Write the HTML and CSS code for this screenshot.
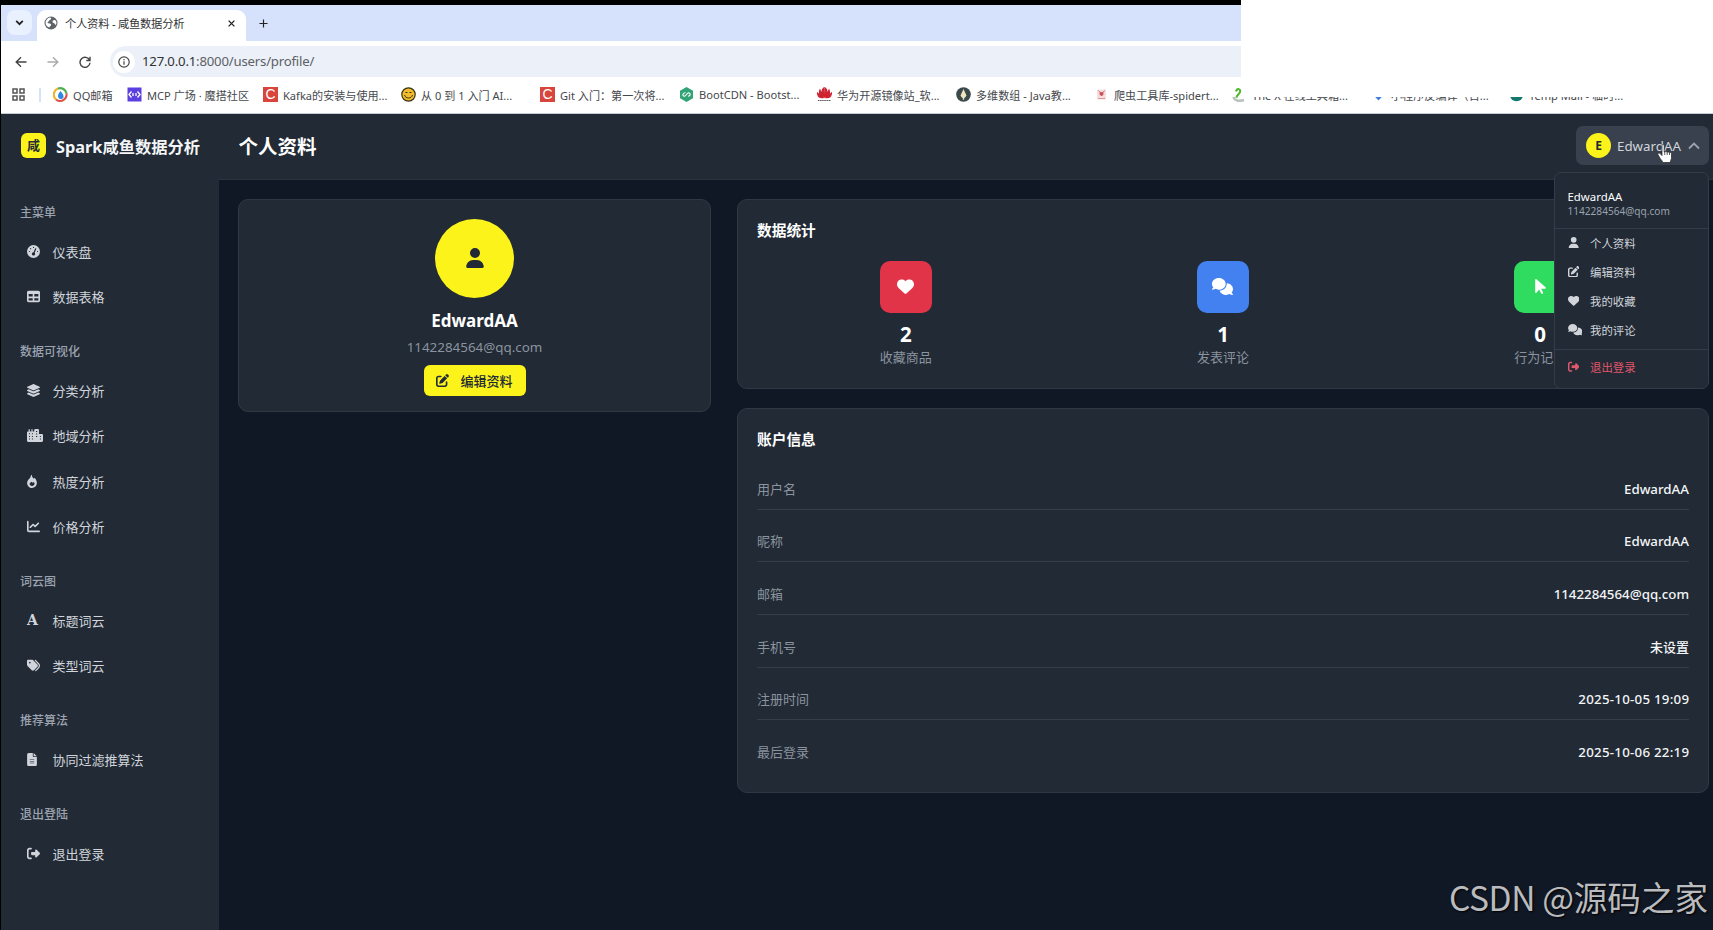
FILE: index.html
```html
<!doctype html>
<html lang="zh-CN">

<head>
    <meta charset="utf-8">
    <meta name="viewport" content="width=device-width, initial-scale=1.0">
    <title>个人资料 - 咸鱼数据分析</title>
    <link rel="stylesheet" href="styles.css">
</head>

<body>
    <!-- 图标库 -->
    <svg class="sprite">
        <symbol id="i-user" viewBox="0 0 448 512"><path d="M224 256A128 128 0 1 0 224 0a128 128 0 1 0 0 256zm-45.7 48C79.8 304 0 383.8 0 482.3C0 498.7 13.3 512 29.7 512H418.3c16.4 0 29.7-13.3 29.7-29.7C448 383.8 368.2 304 269.7 304H178.3z"/></symbol>
        <symbol id="i-heart" viewBox="0 0 512 512"><path d="M47.6 300.4L228.3 469.1c7.5 7 17.4 10.9 27.7 10.9s20.2-3.9 27.7-10.9L464.4 300.4c30.4-28.3 47.6-68 47.6-109.5v-5.8c0-69.9-50.5-129.5-119.4-141C347 36.5 300.6 51.4 268 84L256 96 244 84c-32.6-32.6-79-47.5-124.6-39.9C50.5 55.6 0 115.2 0 185.1v5.8c0 41.5 17.2 81.2 47.6 109.5z"/></symbol>
        <symbol id="i-comments" viewBox="0 0 640 512"><path d="M208 352c114.9 0 208-78.8 208-176S322.9 0 208 0S0 78.8 0 176c0 38.6 14.7 74.3 39.6 103.4c-3.5 9.4-8.7 17.7-14.2 24.7c-4.8 6.2-9.7 11-13.3 14.3c-1.8 1.6-3.3 2.9-4.3 3.7c-.5 .4-.9 .7-1.1 .8l-.2 .2C1 327.2-1.4 334.4 .8 340.9S9.1 352 16 352c21.8 0 43.8-5.6 62.1-12.5c9.2-3.5 17.8-7.4 25.2-11.4C134.1 343.3 169.8 352 208 352zM448 176c0 112.3-99.1 196.9-216.5 207C255.8 457.4 336.4 512 432 512c38.2 0 73.9-8.7 104.7-23.9c7.5 4 16 7.9 25.2 11.4c18.3 6.9 40.3 12.5 62.1 12.5c6.9 0 13.1-4.5 15.2-11.1c2.1-6.6-.2-13.8-5.8-17.9l-.2-.2c-.2-.2-.6-.4-1.1-.8c-1-.8-2.5-2-4.3-3.7c-3.6-3.3-8.5-8.1-13.3-14.3c-5.5-7-10.7-15.4-14.2-24.7c24.9-29 39.6-64.7 39.6-103.4c0-92.8-84.9-168.9-192.6-175.5c.4 5.1 .6 10.3 .6 15.5z"/></symbol>
        <symbol id="i-edit" viewBox="0 0 512 512"><path d="M471.6 21.7c-21.9-21.9-57.3-21.9-79.2 0L362.3 51.7l97.9 97.9 30.1-30.1c21.9-21.9 21.9-57.3 0-79.2L471.6 21.7zm-299.2 220c-6.1 6.1-10.8 13.6-13.5 21.9l-29.6 88.8c-2.9 8.6-.6 18.1 5.8 24.6s15.9 8.7 24.6 5.8l88.8-29.6c8.2-2.7 15.7-7.4 21.9-13.5L437.7 172.3 339.7 74.3 172.4 241.7zM96 64C43 64 0 107 0 160V416c0 53 43 96 96 96H352c53 0 96-43 96-96V320c0-17.7-14.3-32-32-32s-32 14.3-32 32v96c0 17.7-14.3 32-32 32H96c-17.7 0-32-14.3-32-32V160c0-17.7 14.3-32 32-32h96c17.7 0 32-14.3 32-32s-14.3-32-32-32H96z"/></symbol>
        <symbol id="i-logout" viewBox="0 0 512 512"><path d="M377.9 105.9L500.7 228.7c7.2 7.2 11.3 17.1 11.3 27.3s-4.1 20.1-11.3 27.3L377.9 406.1c-6.4 6.4-15 9.9-24 9.9c-18.7 0-33.9-15.2-33.9-33.9l0-62.1-128 0c-17.7 0-32-14.3-32-32l0-64c0-17.7 14.3-32 32-32l128 0 0-62.1c0-18.7 15.2-33.9 33.9-33.9c9 0 17.6 3.6 24 9.9zM160 96L96 96c-17.7 0-32 14.3-32 32l0 256c0 17.7 14.3 32 32 32l64 0c17.7 0 32 14.3 32 32s-14.3 32-32 32l-64 0c-53 0-96-43-96-96L0 128C0 75 43 32 96 32l64 0c17.7 0 32 14.3 32 32s-14.3 32-32 32z"/></symbol>
        <symbol id="i-gauge" viewBox="0 0 512 512"><path fill-rule="evenodd" d="M0 256a256 256 0 1 1 512 0A256 256 0 1 1 0 256zM280 96a24 24 0 1 0-48 0 24 24 0 1 0 48 0zM256 416c35.300 0 64-28.700 64-64c0-17.400-6.900-33.100-18.100-44.600L366 161.700c5.300-12.100-.2-26.300-12.300-31.600s-26.300 .2-31.600 12.300L257.900 288H256c-35.300 0-64 28.700-64 64s28.700 64 64 64zM168 144a24 24 0 1 0-48 0 24 24 0 1 0 48 0zM96 280a24 24 0 1 0 0-48 24 24 0 1 0 0 48zM440 256a24 24 0 1 0-48 0 24 24 0 1 0 48 0z"/></symbol>
        <symbol id="i-table" viewBox="0 0 512 512"><path d="M64 256V160H224v96H64zm0 64H224v96H64V320zm224 96V320H448v96H288zM448 256H288V160H448v96zM64 32C28.700 32 0 60.700 0 96V416c0 35.300 28.700 64 64 64H448c35.300 0 64-28.700 64-64V96c0-35.300-28.700-64-64-64H64z"/></symbol>
        <symbol id="i-layers" viewBox="32 0 512 512"><path d="M264.5 5.2c14.9-6.9 32.1-6.9 47 0l218.6 101c8.5 3.9 13.9 12.4 13.9 21.8s-5.4 17.9-13.9 21.8l-218.6 101c-14.9 6.9-32.1 6.9-47 0L45.900 149.800C37.400 145.800 32 137.300 32 128s5.400-17.900 13.900-21.800L264.500 5.200zM476.900 209.600l53.200 24.600c8.500 3.900 13.900 12.400 13.900 21.800s-5.400 17.900-13.900 21.800l-218.600 101c-14.900 6.900-32.100 6.900-47 0L45.900 277.800C37.400 273.800 32 265.300 32 256s5.400-17.900 13.900-21.800l53.200-24.600 152 70.200c23.400 10.800 50.400 10.800 73.800 0l152-70.200zm-152 198.200l152-70.200 53.200 24.600c8.500 3.900 13.900 12.400 13.900 21.800s-5.400 17.900-13.900 21.800l-218.600 101c-14.900 6.900-32.100 6.900-47 0L45.900 405.800C37.400 401.800 32 393.300 32 384s5.400-17.900 13.900-21.800l53.200-24.600 152 70.200c23.400 10.800 50.400 10.800 73.800 0z"/></symbol>
        <symbol id="i-city" viewBox="0 0 640 512"><path fill-rule="evenodd" d="M480 48c0-26.500-21.500-48-48-48H336c-26.500 0-48 21.500-48 48V96H224V24a24 24 0 0 0-48 0V96H112V24a24 24 0 0 0-48 0V96H48C21.500 96 0 117.500 0 144V464c0 26.500 21.500 48 48 48H592c26.500 0 48-21.500 48-48V240c0-26.500-21.500-48-48-48H480V48zM80 168h40v40H80zM196 168h40v40H196zM80 272h40v40H80zM196 272h40v40H196zM80 376h40v40H80zM196 376h40v40H196zM360 72h48v48H360zM360 176h48v40H360zM360 280h48v40H360zM516 272h40v40H516zM516 376h40v40H516z"/></symbol>
        <symbol id="i-fire" viewBox="0 0 384 512"><path fill-rule="evenodd" d="M153 7c10-11 31-8 35 10 6 52 38 92 74 126 16-9 25-24 31-38 46 54 91 126 91 203 0 115-86 204-192 204S0 424 0 314c0-88 58-139 101-186 37-41 45-78 52-121zM194 432c57 0 99-35 99-83 0-28-13-51-30-73-14 21-29 31-44 31-25 0-38-22-36-54-39 28-84 57-84 105 0 44 39 74 95 74z"/></symbol>
        <symbol id="i-chart" viewBox="0 0 512 512"><path d="M64 64c0-17.700-14.300-32-32-32S0 46.300 0 64V400c0 44.200 35.800 80 80 80H480c17.700 0 32-14.300 32-32s-14.300-32-32-32H80c-8.800 0-16-7.200-16-16V64zm406.600 86.600c12.500-12.500 12.500-32.800 0-45.300s-32.800-12.500-45.300 0L320 210.700l-57.400-57.400c-12.500-12.500-32.800-12.500-45.300 0l-112 112c-12.500 12.500-12.500 32.800 0 45.300s32.800 12.500 45.300 0L240 221.300l57.400 57.400c12.500 12.500 32.800 12.500 45.300 0l128-128z"/></symbol>
        <symbol id="i-tags" viewBox="0 0 512 512"><path d="M345 39.1L472.8 168.4c52.4 53 52.4 138.2 0 191.2L360.8 472.9c-9.3 9.4-24.5 9.5-33.9 .2s-9.5-24.5-.2-33.9L438.6 325.9c33.9-34.3 33.9-89.4 0-123.7L310.9 72.9c-9.3-9.4-9.2-24.6 .2-33.9s24.6-9.2 33.900 .2zM0 229.500V80C0 53.500 21.500 32 48 32H197.500c17 0 33.300 6.700 45.300 18.700l168 168c25 25 25 65.500 0 90.500L277.300 442.700c-25 25-65.500 25-90.500 0l-168-168C6.700 262.700 0 246.500 0 229.500zM144 144a32 32 0 1 0 -64 0 32 32 0 1 0 64 0z"/></symbol>
        <symbol id="i-file" viewBox="0 0 384 512"><path fill-rule="evenodd" d="M64 0C28.700 0 0 28.700 0 64V448c0 35.300 28.700 64 64 64H320c35.300 0 64-28.700 64-64V160H256c-17.700 0-32-14.300-32-32V0H64zM256 0V128H384zM104 256H280V280H104zM104 320H280V344H104zM104 384H280V408H104z"/></symbol>
        <symbol id="i-pointer" viewBox="0 0 320 512"><path d="M0 55.200V426c0 12.200 9.900 22 22 22c6.300 0 12.400-2.700 16.600-7.500L121.200 346l58.100 116.300c7.900 15.800 27.100 22.200 42.900 14.300s22.200-27.100 14.300-42.900L179.800 320H297.900c12.200 0 22.100-9.900 22.100-22.100c0-6.300-2.700-12.300-7.400-16.500L38.600 37.900C34.300 34.100 28.900 32 23.200 32C10.400 32 0 42.400 0 55.200z"/></symbol>
    </svg>

    <!-- 浏览器 -->
    <div class="browser">
        <div class="tabs">
            <div class="tab-search"><svg viewBox="0 0 10 10"><path d="M2 3.500l3 3 3-3"/></svg></div>
            <div class="tab">
                <svg class="globe" viewBox="0 0 14 14"><circle cx="7" cy="7" r="6.500" fill="#5f6368"/><path d="M6 1.500c2 .5 1 2 0 2.300-.8.300-.5 1.200-1.500 1.700S3 7 4.500 7.200s3 .4 2.600 1.700-1.600 1.200-1.800 2.500C3 11 1.600 9 1.600 7S3 2 6 1.500zM9 4.500c1-.7 2-.7 2.700 0 .8 1.200 1 2.800.4 4-.5.700-1 .3-1.200-.6-.3-1-2-.7-2.300-1.700-.1-.8-.1-1.200.4-1.700z" fill="#fff"/></svg>
                <span class="tab-title">个人资料 - 咸鱼数据分析</span>
                <svg class="close" viewBox="0 0 10 10"><path d="M1.800 1.800l6.400 6.400M8.200 1.800L1.800 8.200"/></svg>
            </div>
            <svg class="plus" viewBox="0 0 10 10"><path d="M5 .5v9M.5 5h9"/></svg>
        </div>
        <div class="toolbar">
            <svg viewBox="0 0 12 12"><path d="M11.500 6H1.200M6 1.200L1.200 6 6 10.800"/></svg>
            <svg class="off" viewBox="0 0 12 12"><path d="M.5 6h10.300M6 1.200L10.800 6 6 10.800"/></svg>
            <svg viewBox="0 0 12 12"><path d="M10.600 4.300A5 5 0 1 0 11 6.800M11 .8v3.700H7.300"/></svg>
            <div class="address">
                <span class="info"><svg viewBox="0 0 12 12"><circle cx="6" cy="6" r="5.200"/><path d="M6 5.300v3.500M6 3v1.300"/></svg></span>
                <span class="url">127.0.0.1<i>:8000/users/profile/</i></span>
            </div>
        </div>
        <div class="bookmarks">
            <svg class="apps" viewBox="0 0 13 13"><path d="M1 1h4v4H1zM8 1h4v4H8zM1 8h4v4H1zM8 8h4v4H8z"/></svg>
            <span class="sep"></span>
            <span class="bm bm-qq"><svg viewBox="0 0 15 15"><path d="M5 1.500A6.500 6.500 0 0 0 3 12.500" stroke="#f0b32c" stroke-width="2.200" fill="none"/><path d="M5 1.500a6.500 6.500 0 0 1 8.500 5" stroke="#4caf50" stroke-width="2.200" fill="none"/><path d="M13.500 6.500a6.500 6.500 0 0 1-10.500 6" stroke="#d9534a" stroke-width="2" fill="none"/><path d="M7.500 4C5 7 4.500 9 5.500 10.800s4.500 1.500 5-.6S9 6 7.500 4z" fill="#2a8be0"/></svg>QQ邮箱</span>
            <span class="bm bm-mcp"><svg viewBox="0 0 15 15"><path d="M.5.5h14v14H.5z" fill="#5b3fe0"/><path d="M4.500 4.500L2 7.500l2.500 3M10.500 4.500l2.500 3-2.500 3M6 6v3M9 6v3" stroke="#fff" stroke-width="1.300" fill="none"/></svg>MCP 广场 · 魔搭社区</span>
            <span class="bm bm-kafka"><b class="c-icon">C</b>Kafka的安装与使用...</span>
            <span class="bm bm-ai"><svg viewBox="0 0 15 15"><circle cx="7.500" cy="7.500" r="6.700" fill="#f2bd2c" stroke="#3a3012" stroke-width="1.200"/><path d="M3.500 8c1 4 7 4 8 0M4.500 5.500h2M8.500 5.500h2" stroke="#3a3012" stroke-width="1" fill="none"/></svg>从 0 到 1 入门 AI...</span>
            <span class="bm bm-git"><b class="c-icon">C</b>Git 入门：第一次将...</span>
            <span class="bm bm-cdn"><svg viewBox="0 0 15 15"><path d="M7.500 0L14 3.700v7.600L7.500 15 1 11.300V3.700z" fill="#32a374"/><path d="M6.500 5.800c-3 0-3.500 3-1.200 3.500 2 0 2.400-3.600 4.500-3.600 2.200.6 1.800 3.500-.8 3.500" stroke="#fff" stroke-width="1.100" fill="none"/></svg>BootCDN - Bootst...</span>
            <span class="bm bm-hw"><svg viewBox="0 0 15 15"><path d="M7 9.500C4.500 6 4.500 3 6.800 1zM8 9.500c2.500-3.500 2.500-6.500.2-8.500zM6 10C3 8.500 2 5.500 3 3zM9 10c3-1.500 4-4.500 3-7zM5.500 10.800C2.500 11 .8 9 .5 6zM9.500 10.800c3 .2 4.700-1.800 5-4.800z" fill="#cf2030" stroke="#cf2030" stroke-width="1.100"/><path d="M1 13.500h13" stroke="#555" stroke-width="1" stroke-dasharray="1.500 .6"/></svg>华为开源镜像站_软...</span>
            <span class="bm bm-java"><svg viewBox="0 0 15 15"><circle cx="7.500" cy="7.500" r="7.300" fill="#3a4a4a"/><path d="M7.500 2l3 6.500-1.500 2.300H6L4.500 8.500zM6.800 10.500h1.400v2.300H6.800z" fill="#f0e6c0"/></svg>多维数组 - Java教...</span>
            <span class="bm bm-spider"><svg viewBox="0 0 15 15"><path d="M3 2.500h9v10H3z" fill="#f6dede"/><path d="M4.500 3.500l1.500 2M10.500 3.500L9 5.500M6 5.500h3v2L7.500 9 6 7.500z" fill="#c8505a" stroke="#c8505a" stroke-width=".8"/><path d="M4 11.500h7" stroke="#d99" stroke-width="1"/></svg>爬虫工具库-spidert...</span>
            <span class="bm bm-x"><svg viewBox="0 0 15 15"><path d="M4 4.500C5 1 9 1.500 8 5c-.6 2-3.500 3.200-3.500 5.800" stroke="#4cb82c" stroke-width="2" fill="none"/><path d="M1.500 10c1 4 6 4.500 10.500 3" stroke="#b9c2bd" stroke-width="2.500" fill="none"/></svg>The X 在线工具箱...</span>
            <span class="bm bm-mini"><svg viewBox="0 0 15 15"><path d="M1 6.500l6.500 7 6.500-7z" fill="#3f7fe0"/></svg>小程序反编译（百...</span>
            <span class="bm bm-mail"><svg viewBox="0 0 15 15"><circle cx="7.500" cy="7.500" r="6.800" fill="#14786c"/></svg>Temp Mail - 临时...</span>
        </div>
        <div class="cover"></div>
    </div>

    <!-- 页面 -->
    <div class="page">
        <aside class="sidebar">
            <div class="brand"><span class="logo">咸</span><span><span class="latin">Spark</span>咸鱼数据分析</span></div>
            <h4>主菜单</h4>
            <a><svg><use href="#i-gauge"/></svg>仪表盘</a>
            <a><svg><use href="#i-table"/></svg>数据表格</a>
            <h4>数据可视化</h4>
            <a><svg><use href="#i-layers"/></svg>分类分析</a>
            <a><svg class="wide"><use href="#i-city"/></svg>地域分析</a>
            <a><svg class="narrow"><use href="#i-fire"/></svg>热度分析</a>
            <a><svg><use href="#i-chart"/></svg>价格分析</a>
            <h4>词云图</h4>
            <a><b class="font-icon">A</b>标题词云</a>
            <a><svg><use href="#i-tags"/></svg>类型词云</a>
            <h4>推荐算法</h4>
            <a><svg class="narrow"><use href="#i-file"/></svg>协同过滤推算法</a>
            <h4>退出登陆</h4>
            <a><svg><use href="#i-logout"/></svg>退出登录</a>
        </aside>

        <div class="main">
            <header class="header">
                <h1>个人资料</h1>
                <div class="user-btn">
                    <span class="user-avatar">E</span>
                    <span class="latin">EdwardAA</span>
                    <svg class="chevron" viewBox="0 0 12 8"><path d="M1 6.500l5-5 5 5"/></svg>

                    <div class="dropdown">
                        <div class="dd-head">
                            <div class="dd-name">EdwardAA</div>
                            <div class="dd-mail">1142284564@qq.com</div>
                        </div>
                        <div class="dd-list">
                            <a><svg><use href="#i-user"/></svg>个人资料</a>
                            <a><svg><use href="#i-edit"/></svg>编辑资料</a>
                            <a><svg><use href="#i-heart"/></svg>我的收藏</a>
                            <a><svg class="wide"><use href="#i-comments"/></svg>我的评论</a>
                        </div>
                        <a class="dd-logout"><svg><use href="#i-logout"/></svg>退出登录</a>
                    </div>
                    <svg class="hand" viewBox="0 0 16 20"><path d="M5 1.500c0-1.300 2.200-1.300 2.200 0V8l.6.1c.2-1 1.900-1 2.100.2l.5.100c.3-.8 1.800-.6 1.900.4l.4.100c.5-.7 1.800-.4 1.800.7v4.500c0 1.700-1.300 2.600-1.300 4.400H5.700c0-1.500-1.600-2.500-2.500-4.100L1 10.700c-.7-1.300 1-2.200 2-1.100l2 2z" fill="#fff" stroke="#222" stroke-width=".7"/><path d="M7.800 8v3M10.200 8.500V11M12.500 9v2" stroke="#333" stroke-width=".8"/></svg>
                </div>
            </header>

            <div class="content">
                <section class="card profile">
                    <div class="avatar"><svg><use href="#i-user"/></svg></div>
                    <h2>EdwardAA</h2>
                    <p>1142284564@qq.com</p>
                    <a class="btn"><svg><use href="#i-edit"/></svg>编辑资料</a>
                </section>

                <div class="column">
                    <section class="card stats-card">
                        <h3>数据统计</h3>
                        <div class="stats">
                            <div class="stat">
                                <span class="stat-icon red"><svg><use href="#i-heart"/></svg></span>
                                <strong>2</strong>
                                <small>收藏商品</small>
                            </div>
                            <div class="stat">
                                <span class="stat-icon blue"><svg class="wide"><use href="#i-comments"/></svg></span>
                                <strong>1</strong>
                                <small>发表评论</small>
                            </div>
                            <div class="stat">
                                <span class="stat-icon green"><svg><use href="#i-pointer"/></svg></span>
                                <strong>0</strong>
                                <small>行为记录</small>
                            </div>
                        </div>
                    </section>

                    <section class="card info-card">
                        <h3>账户信息</h3>
                        <div class="row"><span>用户名</span><b>EdwardAA</b></div>
                        <div class="row"><span>昵称</span><b>EdwardAA</b></div>
                        <div class="row"><span>邮箱</span><b>1142284564@qq.com</b></div>
                        <div class="row"><span>手机号</span><b class="cjk">未设置</b></div>
                        <div class="row"><span>注册时间</span><b class="date">2025-10-05 19:09</b></div>
                        <div class="row"><span>最后登录</span><b class="date">2025-10-06 22:19</b></div>
                    </section>
                </div>
            </div>
        </div>
    </div>

    <div class="watermark"><span>CSDN @</span>源码之家</div>
</body>

</html>
```
FILE: styles.css
```css
* {
    box-sizing: border-box;
}

body {
    margin: 0;
    width: 1713px;
    height: 930px;
    overflow: hidden;
    position: relative;
    background: #111825;
    font-family: "Noto Sans", "Noto Sans CJK SC", sans-serif;
    font-size: 13px;
    color: #fff;
    border-left: 1px solid #000;
}

h1, h2, h3, h4, p {
    margin: 0;
}

svg {
    flex: none;
    fill: currentColor;
}

.sprite {
    display: none;
}

/* === Браузер === */
.browser {
    height: 114px;
    position: relative;
    background: #fff;
    border-top: 5px solid #000;
    border-bottom: 1px solid #c3ced4;
    color: #45484d;
}

.tabs {
    height: 36px;
    display: flex;
    align-items: center;
    background: #d6e2fc;
    padding-left: 6px;
}

.tab-search {
    width: 25px;
    height: 25px;
    margin-top: -1px;
    border-radius: 8px;
    background: #e9f0fe;
    display: flex;
    align-items: center;
    justify-content: center;
}

.tab-search svg {
    width: 11px;
    height: 11px;
    fill: none;
    stroke: #222;
    stroke-width: 1.6;
}

.tab {
    width: 209px;
    height: 31px;
    margin: 5px 0 0 5px;
    padding: 0 10px 5px 7px;
    background: #fff;
    border-radius: 9px 9px 0 0;
    display: flex;
    align-items: center;
}

.globe {
    width: 14px;
    height: 14px;
}

.tab-title {
    flex: 1;
    margin-left: 7px;
    font-size: 11.3px;
    color: #333;
    white-space: nowrap;
    letter-spacing: -0.25px;
}

.close, .plus {
    width: 9px;
    height: 9px;
    fill: none;
    stroke: #222;
    stroke-width: 1.5;
}

.plus {
    margin-left: 13px;
    stroke-width: 1.3;
}

.toolbar {
    height: 41px;
    display: flex;
    align-items: center;
    padding: 0 0 0 14px;
}

.toolbar svg {
    width: 12px;
    height: 12px;
    margin-right: 20px;
    fill: none;
    stroke: #444;
    stroke-width: 1.4;
}

.toolbar svg.off {
    stroke: #aaa;
}

.address {
    flex: 1;
    height: 31px;
    margin-left: -1px;
    padding-left: 3px;
    border-radius: 16px 0 0 16px;
    background: #ecf1f9;
    display: flex;
    align-items: center;
    font-size: 13.2px;
    color: #333;
    letter-spacing: -0.2px;
}

.url {
    padding-bottom: 2px;
}

.address i {
    font-style: normal;
    color: #5c6065;
}

.address .info {
    width: 22px;
    height: 22px;
    margin-right: 7px;
    border-radius: 50%;
    background: #fff;
    display: flex;
    align-items: center;
    justify-content: center;
}

.address .info svg {
    margin: 0;
    stroke-width: 1.2;
}

.bookmarks {
    height: 27px;
    margin-top: -1px;
    position: relative;
    display: flex;
    align-items: center;
    font-size: 11.1px;
    white-space: nowrap;
}

.apps {
    width: 13px;
    height: 13px;
    margin-left: 11px;
    fill: none;
    stroke: #555;
    stroke-width: 1.5;
}

.sep {
    width: 2px;
    height: 14px;
    margin: 0 12px 0 14px;
    background: #d3e1fa;
}

.bm {
    display: flex;
    align-items: center;
    gap: 5px;
    flex: none;
}

.bm svg, .c-icon {
    width: 15px;
    height: 15px;
}

.c-icon {
    background: #d8453c;
    color: #fff;
    font: 14px/15px "Liberation Sans", sans-serif;
    text-align: center;
}

.bm-qq { width: 74px; }
.bm-mcp { width: 136px; }
.bm-kafka { width: 138px; }
.bm-ai { width: 139px; }
.bm-git { width: 139px; }
.bm-cdn { width: 138px; }
.bm-hw { width: 139px; }
.bm-java { width: 138px; }
.bm-spider { width: 138px; }
.bm-x { width: 139px; }
.bm-mini { width: 138px; }

.cover {
    position: absolute;
    left: 1240px;
    right: 0;
    top: -5px;
    height: 102px;
    height: 102px;
    background: #fff;
    clip-path: polygon(0 0, 100% 0, 100% 97px, 8px 97px, 8px 88px, 0 88px);
}

/* === Сторінка === */
.page {
    display: flex;
    height: 816px;
}

.sidebar {
    width: 218px;
    background: #212a35;
    color: #d1d5db;
}

.brand {
    height: 66.7px;
    padding: 0 0 3px 20px;
    display: flex;
    align-items: center;
    font-size: 16.3px;
    font-weight: bold;
    color: #f3f5f7;
    white-space: nowrap;
}

.logo {
    width: 25px;
    height: 25px;
    margin-right: 10px;
    border-radius: 6px;
    background: #fbf31a;
    color: #212a35;
    font-size: 13px;
    line-height: 25px;
    text-align: center;
}

.sidebar h4 {
    height: 48.8px;
    padding: 23.500px 0 0 19px;
    font-size: 12px;
    line-height: 18px;
    font-weight: 500;
    color: #9ca3af;
}

.sidebar a {
    height: 45.2px;
    padding: 0 0 1px 26px;
    display: flex;
    align-items: center;
}

.sidebar a svg {
    width: 13px;
    height: 13px;
    margin-right: 12.500px;
}

.sidebar a svg.wide {
    width: 16px;
    margin-right: 9.5px;
}

.sidebar a svg.narrow {
    width: 10px;
    margin-right: 15.5px;
}

.font-icon {
    width: 25.5px;
    font: bold 14px "DejaVu Serif", serif;
}

.main {
    flex: 1;
}

.header {
    height: 66px;
    padding: 0 4px 2px 19.500px;
    background: #212a35;
    border-bottom: 1px solid #2b3541;
    display: flex;
    align-items: center;
    justify-content: space-between;
}

.header h1 {
    padding-bottom: 1px;
    font-size: 19.5px;
}

.user-btn {
    position: relative;
    width: 133px;
    height: 39px;
    padding: 0 9px 0 10px;
    border-radius: 7px;
    background: #38414d;
    color: #d1d5db;
    display: flex;
    align-items: center;
    font-size: 13.3px;
}

.user-avatar {
    width: 25px;
    height: 25px;
    margin-right: 6px;
    border-radius: 50%;
    background: #fbf31a;
    color: #212a35;
    font-size: 12px;
    font-weight: bold;
    line-height: 25px;
    text-align: center;
}

.chevron {
    width: 12px;
    height: 8px;
    margin-left: auto;
    fill: none;
    stroke: #9ca3af;
    stroke-width: 1.8;
}

.hand {
    position: absolute;
    left: 81px;
    top: 18px;
    width: 16px;
    height: 20px;
}

.dropdown {
    position: absolute;
    right: 0;
    top: 46px;
    width: 155px;
    height: 217px;
    background: #212a35;
    border: 1px solid #323d49;
    border-radius: 7px;
    font-size: 11.4px;
    z-index: 2;
}

.hand {
    z-index: 3;
}

.dd-head {
    height: 56px;
    padding: 16px 0 0 12.500px;
    border-bottom: 1px solid #323d49;
}

.dd-name {
    line-height: 16px;
    color: #fff;
}

.dd-mail {
    font-size: 10.1px;
    line-height: 13px;
    color: #9ca3af;
}

.dd-list {
    height: 121px;
    border-bottom: 1px solid #323d49;
}

.dropdown a {
    height: 29.1px;
    padding: 0 0 2px 12.500px;
    display: flex;
    align-items: center;
}

.dropdown a svg {
    width: 11.4px;
    height: 11.4px;
    margin-right: 11.1px;
}

.dropdown a svg.wide {
    width: 14.4px;
    margin-right: 8.1px;
}

.dropdown .dd-logout {
    height: 36px;
    color: #e0566b;
}

.content {
    padding: 19px 4px 0 19px;
    display: grid;
    grid-template-columns: 473px 972px;
    justify-content: space-between;
    align-items: start;
}

.card {
    background: #212a35;
    border: 1px solid #2f3944;
    border-radius: 10px;
}

.profile {
    height: 212.5px;
    padding-top: 18.5px;
    display: flex;
    flex-direction: column;
    align-items: center;
}

.avatar {
    width: 79px;
    height: 79px;
    border-radius: 50%;
    background: #fbf31a;
    color: #212a35;
    display: flex;
    align-items: center;
    justify-content: center;
}

.avatar svg {
    width: 18px;
    height: 20px;
    margin-bottom: 1px;
}

.profile h2 {
    margin-top: 11px;
    font-size: 17px;
    line-height: 24px;
}

.profile p {
    margin: 4.500px 0 8px;
    font-size: 13.4px;
    line-height: 20px;
    color: #8b939e;
}

.btn {
    width: 102px;
    height: 31px;
    padding-bottom: 1px;
    border-radius: 6px;
    background: #fbf31a;
    color: #212a35;
    font-weight: 500;
    display: flex;
    align-items: center;
    justify-content: center;
    gap: 11px;
}

.btn svg {
    width: 13px;
    height: 13px;
}

.column {
    display: grid;
    gap: 19px;
}

.card h3 {
    font-size: 14.7px;
    line-height: 22px;
}

.stats-card {
    height: 189.5px;
    padding: 19px 19px;
}

.stats {
    margin-top: 20px;
    display: grid;
    grid-template-columns: repeat(3, 1fr);
    gap: 19.5px;
}

.stat {
    display: flex;
    flex-direction: column;
    align-items: center;
}

.stat-icon {
    width: 52px;
    height: 52px;
    border-radius: 10px;
    display: flex;
    align-items: center;
    justify-content: center;
}

.stat-icon svg {
    width: 17px;
    height: 17px;
    margin-bottom: 1px;
}

.stat-icon svg.wide {
    width: 21px;
}

.red { background: #e23448; }
.blue { background: #4380f0; }
.green { background: #30dc5f; }

.stat strong {
    margin-top: 7px;
    font-size: 20.5px;
    line-height: 28px;
}

.stat small {
    font-size: 13px;
    line-height: 19px;
    color: #8b939e;
}

.info-card {
    height: 385px;
    padding: 19.500px 19px;
}

.info-card h3 {
    margin-bottom: 7px;
}

.row {
    height: 52.7px;
    padding-top: 21.5px;
    line-height: 20px;
    display: flex;
    justify-content: space-between;
    border-bottom: 1px solid #333e49;
}

.row:last-child {
    border-bottom: 0;
}

.row span {
    color: #8b939e;
}

.row b {
    font-size: 13.3px;
    font-weight: 500;
    color: #f3f5f7;
}

.row b.cjk {
    font-size: 13px;
}

.row b.date {
    letter-spacing: 0.25px;
    margin-right: -0.25px;
}

/* === Водяний знак === */
.watermark {
    position: absolute;
    right: 5px;
    bottom: 8px;
    font: 33.6px/50px "Noto Sans CJK SC", sans-serif;
    color: #b9bbbe;
    text-shadow: 1px 1px 2px #000;
    white-space: nowrap;
}

.watermark span {
    letter-spacing: -0.4px;
}
```
